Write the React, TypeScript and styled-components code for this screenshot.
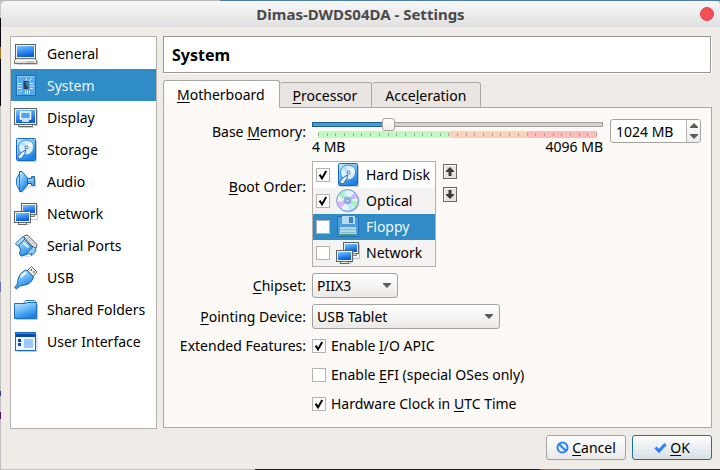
import React, { useState } from 'react';
import styled, { createGlobalStyle, css } from 'styled-components';

const svgUrl = (body: string, w: number, h: number) =>
  `url("data:image/svg+xml,${encodeURIComponent(
    `<svg xmlns='http://www.w3.org/2000/svg' width='${w}' height='${h}' viewBox='0 0 ${w} ${h}'>${body}</svg>`
  )}")`;

const tick = svgUrl(
  "<path d='M2.6 5.6 5 9.4 9.200 2' fill='none' stroke='#000' stroke-width='2'/>",
  12,
  12
);
const caret = svgUrl("<path d='M0 0h8v1L4 5 0 1z' fill='#5c5c5c'/>", 8, 5);

const GlobalStyle = createGlobalStyle`
  * { box-sizing: border-box; }
  body {
    margin: 0;
    font-family: 'Noto Sans', sans-serif;
    font-size: 14px;
    line-height: 20px;
    color: #000;
  }
  button, input, select { font: inherit; color: inherit; margin: 0; }
`;

const Desktop = styled.div`
  display: flex;
  min-height: 100vh;
  padding: 1px 0 1px 1px;
  background:
    linear-gradient(90deg, #c3c0be 0 255px, #1d1a22 255px 540px, #8a6a60 540px 560px, #7d99ad 560px 600px, #2c2b2f 600px) bottom / 100% 1px no-repeat,
    linear-gradient(90deg, #b9b6b4 0 220px, #4f7fa8 220px) top / 100% 1px no-repeat,
    linear-gradient(#c8c8c8 0 18px, #0c0814 18px 47px, #a8752f 47px 59px, #0c0814 59px 106px, #c0c0c0 106px 282px, #6a73c0 282px 292px, #c0c0c0 292px 391px, #3b3690 391px 396px, #c0c0c0 396px 412px, #5b1160 412px 419px, #c0c0c0 419px);
`;

const Window = styled.div`
  flex: 1;
  display: flex;
  flex-direction: column;
  min-width: 0;
  background: #efebe7;
  border-radius: 5px 5px 0 0;
`;

const TitleBar = styled.header`
  display: grid;
  grid-template-columns: 28px 1fr 28px;
  align-items: center;
  height: 26px;
  border-radius: 5px 5px 0 0;
  background: linear-gradient(#f7f7f7, #e0e0e0);
`;

const Title = styled.h1`
  grid-column: 2;
  margin: 0;
  font-size: 15px;
  line-height: 20px;
  font-weight: 700;
  text-align: center;
  color: #4a4a4a;
`;

const CloseButton = styled.button`
  width: 14px;
  height: 14px;
  margin-left: 8px;
  padding: 0;
  border: 1px solid #dd4650;
  border-radius: 50%;
  background: #f54e57;
`;

const Body = styled.div`
  flex: 1;
  display: flex;
  gap: 6px;
  padding: 9px 8px 0 9px;
`;

const Sidebar = styled.nav`
  flex: 0 0 147px;
  border: 1px solid #b3b0ad;
  background: #fff;
`;

const PlainList = styled.ul`
  margin: 0;
  padding: 0;
  list-style: none;
`;

const selectedColors = css`
  background: #308cc6;
  color: #eef6fb;
`;

const SideItem = styled.button<{ $active: boolean }>`
  display: flex;
  align-items: center;
  gap: 9px;
  width: 100%;
  height: 32px;
  padding: 1px 3px 0;
  border: 0;
  background: transparent;
  text-align: left;
  white-space: nowrap;
  ${(p) => p.$active && selectedColors}
`;

const Icon = styled.svg`
  flex: none;
  width: 24px;
  height: 24px;
`;

const Main = styled.main`
  flex: 1;
  display: flex;
  flex-direction: column;
  min-width: 0;
`;

const PageHeading = styled.h2`
  margin: 0 1px 7px 0;
  padding: 7px 8px 6px;
  border: 1px solid #989592;
  box-shadow: 1px 1px #fff;
  background: #fff;
  font-size: 16px;
  line-height: 22px;
  font-weight: 700;
`;

const TabList = styled.div`
  display: flex;
  align-items: flex-end;
  height: 28px;
  margin-bottom: -1px;
`;

const Tab = styled.button<{ $active: boolean }>`
  height: ${(p) => (p.$active ? 28 : 26)}px;
  padding: 2px 14px 0 13px;
  border: 1px solid #a9a6a3;
  border-left-width: ${(p) => (p.$active ? 1 : 0)}px;
  border-bottom-color: ${(p) => (p.$active ? '#fdf9f6' : '#a9a6a3')};
  border-radius: 3px 3px 0 0;
  background: ${(p) => (p.$active ? 'linear-gradient(#ffffff, #fdf9f6)' : '#e9e5e2')};
  z-index: ${(p) => (p.$active ? 1 : 0)};
`;

const Pane = styled.section`
  flex: 1;
  margin-bottom: 1px;
  padding: 10px;
  border: 1px solid #a9a6a3;
  background: #fdf9f6;
`;

const Form = styled.div`
  display: grid;
  grid-template-columns: 132px 1fr;
  gap: 6px;
`;

const labelText = css<{ $line: number }>`
  line-height: ${(p) => p.$line}px;
  text-align: right;
  white-space: nowrap;
`;
const FieldLabel = styled.label<{ $line: number }>`
  ${labelText}
`;
const FieldCaption = styled.span<{ $line: number }>`
  ${labelText}
`;

const Mnemonic = styled.u`
  text-decoration: underline 1px;
  text-underline-offset: 2px;
  text-decoration-skip-ink: none;
`;

const MemoryRow = styled.div`
  display: flex;
  align-items: flex-start;
  gap: 7px;
`;

const MemorySlider = styled.div`
  flex: 1;
  min-width: 0;
`;

const Range = styled.input<{ $fill: number }>`
  display: block;
  width: 100%;
  height: 12px;
  appearance: none;
  background: transparent;
  &::-webkit-slider-runnable-track {
    height: 5px;
    border: 1px solid #a19e9b;
    background: linear-gradient(90deg, #3d9fdf ${(p) => p.$fill}%, #d5d2cf ${(p) => p.$fill}%);
    border-image: linear-gradient(90deg, #1f5f8f ${(p) => p.$fill}%, #a19e9b ${(p) => p.$fill}%) 1;
  }
  &::-webkit-slider-thumb {
    appearance: none;
    width: 13px;
    height: 13px;
    margin-top: -5px;
    border: 1px solid #a5a29f;
    border-radius: 3px;
    background: linear-gradient(#ffffff, #f1efed);
  }
`;

const Scale = styled.div`
  display: flex;
  justify-content: space-between;
  align-items: center;
  height: 7px;
  margin: 1px 6px;
  background: linear-gradient(90deg, #c0fac0 47%, #fdd0b8 47% 75%, #fdbcba 75%);
`;

const ScaleTick = styled.i`
  width: 1px;
  height: 3px;
  background: #a5a29f;
`;

const ScaleLabels = styled.div`
  display: flex;
  justify-content: space-between;
  line-height: 16px;
`;

const SpinBox = styled.div`
  display: flex;
  width: 91px;
  height: 24px;
  margin-top: 1px;
  border: 1px solid #a5a29f;
  border-radius: 3px;
  background: #fff;
  overflow: hidden;
`;

const SpinInput = styled.input`
  flex: 1;
  min-width: 0;
  padding: 2px 0 0 5px;
  border: 0;
  background: transparent;
`;

const SpinButtons = styled.div`
  display: flex;
  flex-direction: column;
  width: 14px;
  border-left: 1px solid #b5b2af;
  background: linear-gradient(#fff, #eeecea);
`;

const SpinButton = styled.button`
  flex: 1;
  display: grid;
  place-items: center;
  padding: 0;
  border: 0;
  background: transparent;
`;

const BootRow = styled.div`
  display: flex;
  align-items: flex-start;
  gap: 7px;
`;

const BootList = styled(PlainList)`
  width: 124px;
  border: 1px solid #b3b0ad;
`;

const BootItem = styled.li<{ $active: boolean }>`
  background: #fff;
  &:nth-child(even) { background: #f5f3f2; }
  && { ${(p) => p.$active && selectedColors} }
`;

const BootLabel = styled.label`
  display: flex;
  align-items: center;
  gap: 6px;
  height: 26px;
  padding-left: 3px;
  white-space: nowrap;
`;

const CheckBox = styled.input`
  flex: none;
  width: 14px;
  height: 14px;
  appearance: none;
  border: 1px solid #b5b2af;
  background: #fff center / 12px 12px no-repeat;
  &:checked { background-image: ${tick}; }
`;

const MoveButtons = styled.div`
  display: flex;
  flex-direction: column;
  gap: 8px;
  padding-top: 3px;
`;

const MoveButton = styled.button`
  display: grid;
  place-items: center;
  width: 14px;
  height: 15px;
  padding: 0;
  border: 1px solid #6b6967;
  background: #e6e3e1;
  box-shadow: inset 1px 1px #fff;
`;

const Select = styled.select<{ $width: number }>`
  justify-self: start;
  width: ${(p) => p.$width}px;
  height: 25px;
  padding: 0 20px 0 4px;
  appearance: none;
  border: 1px solid #a5a29f;
  border-radius: 3px;
  background: ${caret} right 6px center no-repeat, linear-gradient(#fff, #ebe9e7);
`;

const Features = styled.div`
  display: flex;
  flex-direction: column;
  align-items: flex-start;
  gap: 7px;
`;

const Feature = styled.label`
  display: flex;
  align-items: center;
  gap: 5px;
  height: 22px;
`;

const Footer = styled.footer`
  display: flex;
  justify-content: flex-end;
  gap: 6px;
  padding: 6px 8px 9px;
`;

const DialogButton = styled.button<{ $primary?: boolean }>`
  display: flex;
  align-items: center;
  justify-content: center;
  gap: 3px;
  width: 80px;
  height: 25px;
  padding: 0;
  border: 1px solid ${(p) => (p.$primary ? '#1f6fa5' : '#a5a29f')};
  border-radius: 3px;
  background: ${(p) => (p.$primary ? 'linear-gradient(#fcfdfd, #d9e0e5)' : 'linear-gradient(#fff, #ebe9e7)')};
`;

const Screen = ({ x, y, w, h, id }: { x: number; y: number; w: number; h: number; id: string }) => (
  <g>
    <defs>
      <linearGradient id={id} x1="0" y1="0" x2="0.3" y2="1">
        <stop offset="0" stopColor="#7cc6ff" />
        <stop offset="0.5" stopColor="#3a92f4" />
        <stop offset="1" stopColor="#0c5fdc" />
      </linearGradient>
    </defs>
    <rect x={x + 0.5} y={y + 0.5} width={w - 1} height={h - 1} fill="#f2f2f0" stroke="#5f6265" />
    <rect x={x + 2} y={y + 2} width={w - 4} height={h - 4} fill={`url(#${id})`} />
  </g>
);

const Blue = ({ id }: { id: string }) => (
  <defs>
    <linearGradient id={id} x1="0" y1="0" x2="0.5" y2="1">
      <stop offset="0" stopColor="#c9ebff" />
      <stop offset="0.5" stopColor="#6fbcf8" />
      <stop offset="1" stopColor="#1b82e6" />
    </linearGradient>
  </defs>
);

const GeneralIcon = () => (
  <Icon viewBox="0 0 24 24">
    <path d="M3 22.5h20.5V18" fill="none" stroke="#000" opacity=".18" />
    <Screen x={1} y={2} w={21} h={15} id="gen" />
    <path d="M2.5 16.5h18l2 2v3H.5v-3z" fill="#e4e4e0" stroke="#73756f" />
    <path d="M1 18.5h21" stroke="#fff" />
    <path d="M12 20h8" stroke="#aaa" />
  </Icon>
);

const SystemIcon = () => (
  <Icon viewBox="0 0 24 24">
    <rect x="2.5" y="1.5" width="19" height="20" fill="#55abed" stroke="#1b6fc0" />
    <path d="M3.5 21V2.500H21" fill="none" stroke="#8fcbf8" />
    <path
      d="M4 9.500h4M4 12h4M4 14.500h4M16 9.500h3M16 12h4M16 14.500h3M12.500 4v2.500M18 4l-3 3M5 19l3-3M11.500 16.500V20M13.500 16.500V20M15.500 16.500V20"
      stroke="#d4ecfc"
      fill="none"
    />
    <rect x="9.500" y="7" width="5" height="8" fill="#27415c" />
    <path d="M11 8h3v6z" fill="#5c7894" />
  </Icon>
);

const DisplayIcon = () => (
  <Icon viewBox="0 0 24 24">
    <path d="M5 21.500h15M23.500 4v15.500H20" fill="none" stroke="#000" opacity=".2" />
    <Screen x={0} y={2} w={23} h={17} id="dis" />
    <path d="M4.500 18.500h14v2h-14z" fill="#eee" stroke="#666" />
    <path d="M6.500 6h10v7h-10zM8 15h7" fill="#4fa4f8" stroke="#fff" strokeWidth="1.500" />
  </Icon>
);

const DiskIcon = ({ id = 'hdd' }: { id?: string }) => (
  <Icon viewBox="0 0 24 24">
    <Blue id={id} />
    <path d="M4 23.500h18.500V3" fill="none" stroke="#000" opacity=".2" />
    <rect x="2.500" y=".5" width="19" height="22" rx="1" fill={`url(#${id})`} stroke="#126ac4" />
    <circle cx="12" cy="9.500" r="7.500" fill="#d9effd" stroke="#3c8fd8" />
    <path d="M12 9.500 17 4a7 7 0 0 1 2 5z" fill="#fff" />
    <path d="M12 9.500 6 6a7 7 0 0 1 4-3z" fill="#b9dffa" />
    <circle cx="12.500" cy="9.500" r="1.500" fill="#fff" stroke="#1668b8" />
    <path d="M11.500 12 7.500 14.500l-3.500 4 .5 2.500 3-.5 3.500-5z" fill="#f1f9ff" stroke="#1668b8" strokeLinejoin="round" />
  </Icon>
);

const AudioIcon = () => (
  <Icon viewBox="0 0 24 24">
    <Blue id="aud" />
    <path d="M7 23 14 17h7.500V9" fill="none" stroke="#000" opacity=".2" />
    <path d="M5.500 1.500H8l5.500 6.500v7L8 21.500H5.500z" fill="url(#aud)" stroke="#22629f" />
    <path d="M5.500 3.500 2.500 8.500v6l3 6z" fill="#90cdf8" stroke="#2b78bd" />
    <path d="M13.500 8.500h4v-2h3v9h-3v-2h-4z" fill="#55aaf0" stroke="#22629f" />
    <path d="M14 10h6" stroke="#c9e8ff" />
  </Icon>
);

const NetworkIcon = ({ id = 'net' }: { id?: string }) => (
  <Icon viewBox="0 0 24 24">
    <path d="M3 22.500h12l2-5h6.500V3" fill="none" stroke="#000" opacity=".2" />
    <Screen x={7} y={1} w={16} h={12} id={`${id}a`} />
    <path d="M14.500 12.500h6v2h-6z" fill="#ddd" stroke="#777" />
    <Screen x={0} y={9} w={17} h={12} id={`${id}b`} />
    <path d="M4.500 20.500h8v2h-8z" fill="#eee" stroke="#666" />
  </Icon>
);

const SerialIcon = () => (
  <Icon viewBox="0 0 24 24">
    <Blue id="ser" />
    <path d="M7 23 16 22.500l6.500-7" fill="none" stroke="#000" opacity=".15" />
    <path d="M9.500 2.500 12 1l2 .5 9 9-.5 3-2.500.5z" fill="#e9e9e6" stroke="#555" strokeLinejoin="round" />
    <path d="M13 3.500 21 11.500" stroke="#777" strokeDasharray="1 1" />
    <path d="M9.500 4.500 19 13.500v5l-3.500-.5L13 20.500 7 22l-1.500-2L6.500 15 4.500 12z" fill="url(#ser)" stroke="#1766b5" strokeLinejoin="round" />
    <path d="M9 2.500 1.500 9.500 3.500 12 11 5z" fill="#b5defb" stroke="#2a6fae" strokeLinejoin="round" />
    <path d="M19.500 12.500 13.500 18l2 2.500 2-1v2l3-2.500 1.500-4.500z" fill="#8cc8f8" stroke="#2a6fae" strokeLinejoin="round" />
    <path d="m9.500 9 5 4.500" stroke="#e4f5ff" strokeWidth="2" />
  </Icon>
);

const UsbIcon = () => (
  <Icon viewBox="0 0 24 24">
    <Blue id="usb" />
    <path d="m13.500 4.500 4-4 5.500 5.500-4 4.500z" fill="#f4f4f2" stroke="#666" strokeLinejoin="round" />
    <path d="m17 3.500 1 1M19.500 5.500l1 1" stroke="#333" strokeWidth="1.500" />
    <path
      d="M12.500 4 19.500 11c-1 4-4 7-8.500 8-2.500.5-4 .5-5.500 1.500L2.500 23 .8 21.500 3 18.500C4 16 3.500 13 5.500 9.500 7 7 9.500 4.500 12.500 4z"
      fill="url(#usb)"
      stroke="#175fa9"
      strokeLinejoin="round"
    />
    <path d="M7 11.500C8.500 9 10 7.500 12.500 6.500" stroke="#effaff" strokeWidth="2" fill="none" />
  </Icon>
);

const FolderIcon = () => (
  <Icon viewBox="0 0 24 24">
    <Blue id="fol" />
    <path d="M2 21.500h21.500V6" fill="none" stroke="#000" opacity=".2" />
    <path d="M9.500 5.500 11.500 2.500h9l1.500 2v10H9.500z" fill="#d9efff" stroke="#2a78c8" />
    <path d="M.5 5.500h11l2-1h9v16H.5z" fill="url(#fol)" stroke="#1c6fc4" />
  </Icon>
);

const InterfaceIcon = () => (
  <Icon viewBox="0 0 24 24">
    <path d="M3 21.500h20V4" fill="none" stroke="#000" opacity=".2" />
    <rect x="1.500" y="2.500" width="20" height="18" fill="#eef6ff" stroke="#1a66c4" />
    <path d="M2 3h19v4H2z" fill="#0a4ba5" />
    <path d="M2 3.500h19" stroke="#3d8ae6" />
    <path d="M4 9h3v3H4zM4 13h3v3H4z" fill="#0a4ba5" />
    <path d="M10 9h9v9h-9z" fill="#9cc8fb" />
  </Icon>
);

const OpticalIcon = () => (
  <Icon viewBox="0 0 24 24">
    <circle cx="12.500" cy="12.500" r="11" fill="#000" opacity=".18" />
    <circle cx="11.500" cy="11.500" r="10.800" fill="#eaf3fd" stroke="#5c8ccc" />
    <path d="M11.500 11.500 2.500 7A10 10 0 0 1 7 2.500z" fill="#a4f0b4" />
    <path d="M11.500 11.500 7 2.500a10 10 0 0 1 4-1z" fill="#c8f0fa" />
    <path d="M11.500 11.500 18 4a10 10 0 0 1 3.500 5z" fill="#c4b8fc" />
    <path d="M11.500 11.500 21.500 12a10 10 0 0 1-3.500 6.500z" fill="#a4f4c8" />
    <path d="M11.500 11.500 17 19.500a10 10 0 0 1-4 2z" fill="#b8e4fc" />
    <path d="M11.500 11.500 5 19A10 10 0 0 1 1.500 13z" fill="#dcb4f8" />
    <circle cx="11.500" cy="11.500" r="3.500" fill="#a8cdf2" stroke="#7ca4dc" />
    <circle cx="11.500" cy="11.500" r="1.500" fill="#fff" stroke="#4c78b4" />
  </Icon>
);

const FloppyIcon = () => (
  <Icon viewBox="0 0 24 24">
    <path d="M1.500 1.500h19l2 2v18h-21z" fill="#4b9fdf" stroke="#2470b4" />
    <path d="M6 1h13v8H6z" fill="#b9d9ee" />
    <path d="M13 2h4v6h-4z" fill="#3b83bd" />
    <path d="M4 12h16v9H4z" fill="#b4d8ee" />
    <path d="M5 14.500h14M5 17.500h14" stroke="#82b4d4" />
    <path d="M4 19h16v2H4z" fill="#3d9c78" />
  </Icon>
);

const sections = [
  { name: 'General', icon: <GeneralIcon /> },
  { name: 'System', icon: <SystemIcon /> },
  { name: 'Display', icon: <DisplayIcon /> },
  { name: 'Storage', icon: <DiskIcon /> },
  { name: 'Audio', icon: <AudioIcon /> },
  { name: 'Network', icon: <NetworkIcon /> },
  { name: 'Serial Ports', icon: <SerialIcon /> },
  { name: 'USB', icon: <UsbIcon /> },
  { name: 'Shared Folders', icon: <FolderIcon /> },
  { name: 'User Interface', icon: <InterfaceIcon /> },
];

const bootDevices = [
  { name: 'Hard Disk', icon: <DiskIcon id="bootHdd" />, on: true },
  { name: 'Optical', icon: <OpticalIcon />, on: true },
  { name: 'Floppy', icon: <FloppyIcon />, on: false },
  { name: 'Network', icon: <NetworkIcon id="bootNet" />, on: false },
];

const tabs = [
  { before: '', key: 'M', rest: 'otherboard' },
  { before: '', key: 'P', rest: 'rocessor' },
  { before: 'Acce', key: 'l', rest: 'eration' },
];

const features = [
  { before: 'Enable ', key: 'I', rest: '/O APIC', on: true },
  { before: 'Enable ', key: 'E', rest: 'FI (special OSes only)', on: false },
  { before: 'Hardware Clock in ', key: 'U', rest: 'TC Time', on: true },
];

const MIN = 4;
const MAX = 4096;

export default function App() {
  const [memory, setMemory] = useState(1024);
  const [section, setSection] = useState('System');
  const [tab, setTab] = useState('M');
  const step = (d: number) => setMemory((m) => Math.min(MAX, Math.max(MIN, m + d)));

  return (
    <Desktop>
      <GlobalStyle />
      <Window>
        <TitleBar>
          <Title>Dimas-DWDS04DA - Settings</Title>
          <CloseButton aria-label="Close" />
        </TitleBar>
        <Body>
          <Sidebar>
            <PlainList>
              {sections.map((s) => (
                <li key={s.name}>
                  <SideItem $active={s.name === section} onClick={() => setSection(s.name)}>
                    {s.icon}
                    {s.name}
                  </SideItem>
                </li>
              ))}
            </PlainList>
          </Sidebar>
          <Main>
            <PageHeading>{section}</PageHeading>
            <TabList role="tablist">
              {tabs.map((t) => (
                <Tab key={t.key} role="tab" aria-selected={t.key === tab} $active={t.key === tab} onClick={() => setTab(t.key)}>
                  {t.before}
                  <Mnemonic>{t.key}</Mnemonic>
                  {t.rest}
                </Tab>
              ))}
            </TabList>
            <Pane role="tabpanel">
              <Form>
                <FieldLabel htmlFor="memory" $line={28}>
                  Base <Mnemonic>M</Mnemonic>emory:
                </FieldLabel>
                <MemoryRow>
                  <MemorySlider>
                    <Range
                      id="memory"
                      type="range"
                      min={MIN}
                      max={MAX}
                      value={memory}
                      $fill={((memory - MIN) / (MAX - MIN)) * 100}
                      onChange={(e) => setMemory(Number(e.target.value))}
                    />
                    <Scale>
                      {Array.from({ length: 33 }, (_, i) => (
                        <ScaleTick key={i} />
                      ))}
                    </Scale>
                    <ScaleLabels>
                      <span>4 MB</span>
                      <span>4096 MB</span>
                    </ScaleLabels>
                  </MemorySlider>
                  <SpinBox>
                    <SpinInput
                      aria-label="Base memory size"
                      value={`${memory} MB`}
                      onChange={(e) => setMemory(parseInt(e.target.value, 10) || MIN)}
                    />
                    <SpinButtons>
                      <SpinButton aria-label="Increase" onClick={() => step(4)}>
                        <svg width="8" height="5"><path d="M0 5V4l4-4 4 4v1z" fill="#5c5c5c" /></svg>
                      </SpinButton>
                      <SpinButton aria-label="Decrease" onClick={() => step(-4)}>
                        <svg width="8" height="5"><path d="M0 0h8v1L4 5 0 1z" fill="#5c5c5c" /></svg>
                      </SpinButton>
                    </SpinButtons>
                  </SpinBox>
                </MemoryRow>

                <FieldCaption $line={52}>
                  <Mnemonic>B</Mnemonic>oot Order:
                </FieldCaption>
                <BootRow>
                  <BootList>
                    {bootDevices.map((d) => (
                      <BootItem key={d.name} $active={d.name === 'Floppy'}>
                        <BootLabel>
                          <CheckBox type="checkbox" defaultChecked={d.on} />
                          {d.icon}
                          {d.name}
                        </BootLabel>
                      </BootItem>
                    ))}
                  </BootList>
                  <MoveButtons>
                    <MoveButton aria-label="Move up">
                      <svg width="8" height="9"><path d="M4 0 8 4v1H5.500v4h-3V5H0V4z" fill="#3c3b3a" /></svg>
                    </MoveButton>
                    <MoveButton aria-label="Move down">
                      <svg width="8" height="9"><path d="M4 9 8 5V4H5.500V0h-3v4H0v1z" fill="#3c3b3a" /></svg>
                    </MoveButton>
                  </MoveButtons>
                </BootRow>

                <FieldLabel htmlFor="chipset" $line={25}>
                  <Mnemonic>C</Mnemonic>hipset:
                </FieldLabel>
                <Select id="chipset" $width={86} defaultValue="PIIX3">
                  <option>PIIX3</option>
                  <option>ICH9</option>
                </Select>

                <FieldLabel htmlFor="pointing" $line={25}>
                  <Mnemonic>P</Mnemonic>ointing Device:
                </FieldLabel>
                <Select id="pointing" $width={188} defaultValue="USB Tablet">
                  <option>USB Tablet</option>
                  <option>PS/2 Mouse</option>
                </Select>

                <FieldCaption $line={22}>Extended Features:</FieldCaption>
                <Features>
                  {features.map((f) => (
                    <Feature key={f.key}>
                      <CheckBox type="checkbox" defaultChecked={f.on} />
                      <span>
                        {f.before}
                        <Mnemonic>{f.key}</Mnemonic>
                        {f.rest}
                      </span>
                    </Feature>
                  ))}
                </Features>
              </Form>
            </Pane>
          </Main>
        </Body>
        <Footer>
          <DialogButton>
            <svg width="13" height="13" viewBox="0 0 13 13">
              <path d="M2.500 2.500 10.500 10.500M6.500 1.500a5 5 0 1 1 0 10 5 5 0 0 1 0-10z" fill="none" stroke="#2a7fff" strokeWidth="2" />
            </svg>
            <span><Mnemonic>C</Mnemonic>ancel</span>
          </DialogButton>
          <DialogButton $primary>
            <svg width="13" height="13" viewBox="0 0 13 13">
              <path d="M1.500 6.500 5 10l6.500-7" fill="none" stroke="#2a7fff" strokeWidth="3" />
            </svg>
            <span><Mnemonic>O</Mnemonic>K</span>
          </DialogButton>
        </Footer>
      </Window>
    </Desktop>
  );
}
